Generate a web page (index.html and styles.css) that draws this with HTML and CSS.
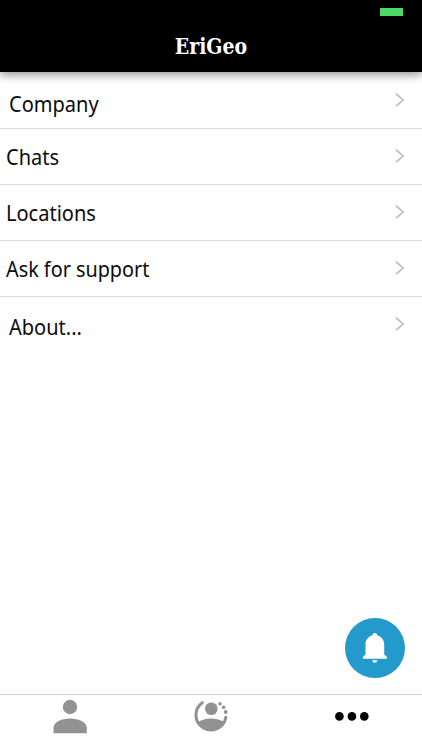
FILE: index.html
```
<!DOCTYPE html>
<html lang="en">
<head>
<meta charset="utf-8">
<title>EriGeo</title>
<link rel="stylesheet" href="styles.css">
</head>
<body>
<div class="app">
  <header class="header">
    <div class="battery"></div>
    <h1 class="title">EriGeo</h1>
  </header>
  <main class="menu">
    <div class="row inset"><span class="label company">Company</span><svg class="chevron" viewBox="0 0 10 16"><path d="M1 1.7 8 8 1 14.3"/></svg></div>
    <div class="row"><span class="label chats">Chats</span><svg class="chevron" viewBox="0 0 10 16"><path d="M1 1.7 8 8 1 14.3"/></svg></div>
    <div class="row"><span class="label locations">Locations</span><svg class="chevron" viewBox="0 0 10 16"><path d="M1 1.7 8 8 1 14.3"/></svg></div>
    <div class="row"><span class="label support">Ask for support</span><svg class="chevron" viewBox="0 0 10 16"><path d="M1 1.7 8 8 1 14.3"/></svg></div>
    <div class="row inset last"><span class="label about">About...</span><svg class="chevron" viewBox="0 0 10 16"><path d="M1 1.7 8 8 1 14.3"/></svg></div>
  </main>
  <button class="fab" aria-label="Notifications">
    <svg width="60" height="60" viewBox="0 0 60 60"><path fill="#fff" d="M29.8 15c1.3 0 2.2.9 2.3 2.3 4.100 1.100 7.100 4.600 7.100 9.200V36.500l2.700 2.300V40.800H17.900V38.800l2.600-2.300V26.500c0-4.600 2.900-8.100 7-9.200.1-1.400 1-2.300 2.300-2.300ZM27.300 42.200h5c0 1.400-1 2.500-2.500 2.500s-2.500-1.100-2.500-2.500Z"/></svg>
  </button>
  <nav class="tabs">
    <div class="tab"><svg width="36" height="36" viewBox="0 0 36 36"><g fill="#929292"><circle cx="18" cy="9" r="7.200"/><path d="M1.500 35.200V30C1.500 24.100 9.200 20.500 18 20.500s16.800 3.600 16.800 9.500v5.200Z"/></g></svg></div>
    <div class="tab"><svg width="36" height="36" viewBox="0 0 36 36"><g fill="#929292"><circle cx="18.300" cy="10.700" r="6.300"/><path d="M4.200 24.700Q10.500 20.600 18 20.600t14 4A16 16 0 0 1 4.200 24.700Z"/><circle cx="27" cy="5.700" r="1.700"/><circle cx="30.600" cy="9.300" r="1.800"/><circle cx="32.700" cy="14" r="1.900"/></g><path fill="none" stroke="#929292" stroke-width="3" stroke-linecap="round" d="M9.300 4.700A15 15 0 1 0 32.800 19.200"/></svg></div>
    <div class="tab"><svg width="36" height="36" viewBox="0 0 36 36"><circle cx="5.400" cy="18.400" r="4.300"/><circle cx="17.900" cy="18.400" r="4.300"/><circle cx="30.300" cy="18.400" r="4.300"/></svg></div>
  </nav>
</div>
</body>
</html>
```
FILE: styles.css
```
* { box-sizing: border-box; }
body { margin: 0; background: #fff; }
.app {
  position: relative;
  display: flex;
  flex-direction: column;
  width: 422px;
  height: 750px;
  overflow: hidden;
  background: #fff;
}
.header {
  flex: none;
  height: 72px;
  padding-top: 8px;
  background: #000;
  box-shadow: 0 3px 9px rgba(0, 0, 0, .42);
}
.battery {
  width: 23px;
  height: 8px;
  margin-left: 380px;
  background: #4cd964;
}
.title {
  margin: 16px 0 0;
  color: #fff;
  font: bold 21.500px/30px "DejaVu Serif", serif;
  text-align: center;
  transform: scaleX(.88);
}
.menu { flex: 1; }
.row {
  display: flex;
  align-items: center;
  justify-content: space-between;
  height: 56px;
  padding: 0 17.500px 0 6px;
  border-bottom: 1px solid #dcdcdc;
}
.row.inset { padding-left: 9px; }
.row:first-child { height: 57px; }
.row.last { border: 0; }
.label {
  margin-top: -2px;
  color: #0c0c0c;
  font: 22px/30px "Noto Sans", sans-serif;
  white-space: nowrap;
  transform: scaleX(.91);
  transform-origin: left;
}
.company { margin-top: 5px; }
.about { margin-top: 1px; }
.support { transform: scaleX(.9); }
.chevron {
  width: 10px;
  height: 16px;
  margin-bottom: 2px;
  fill: none;
  stroke: #c3c3c6;
  stroke-width: 1.900;
}
.row:first-child .chevron { margin-bottom: 0; }
.fab {
  position: absolute;
  left: 345px;
  top: 618px;
  width: 60px;
  height: 60px;
  padding: 0;
  border: 0;
  border-radius: 50%;
  background: #2499cc;
}
.fab svg { display: block; }
.tabs {
  display: grid;
  grid-template-columns: repeat(3, 1fr);
  height: 56px;
  border-top: 1px solid #d2d2d2;
}
.tab {
  display: flex;
  justify-content: center;
  padding-top: 3px;
}
.tab svg { display: block; }
```
